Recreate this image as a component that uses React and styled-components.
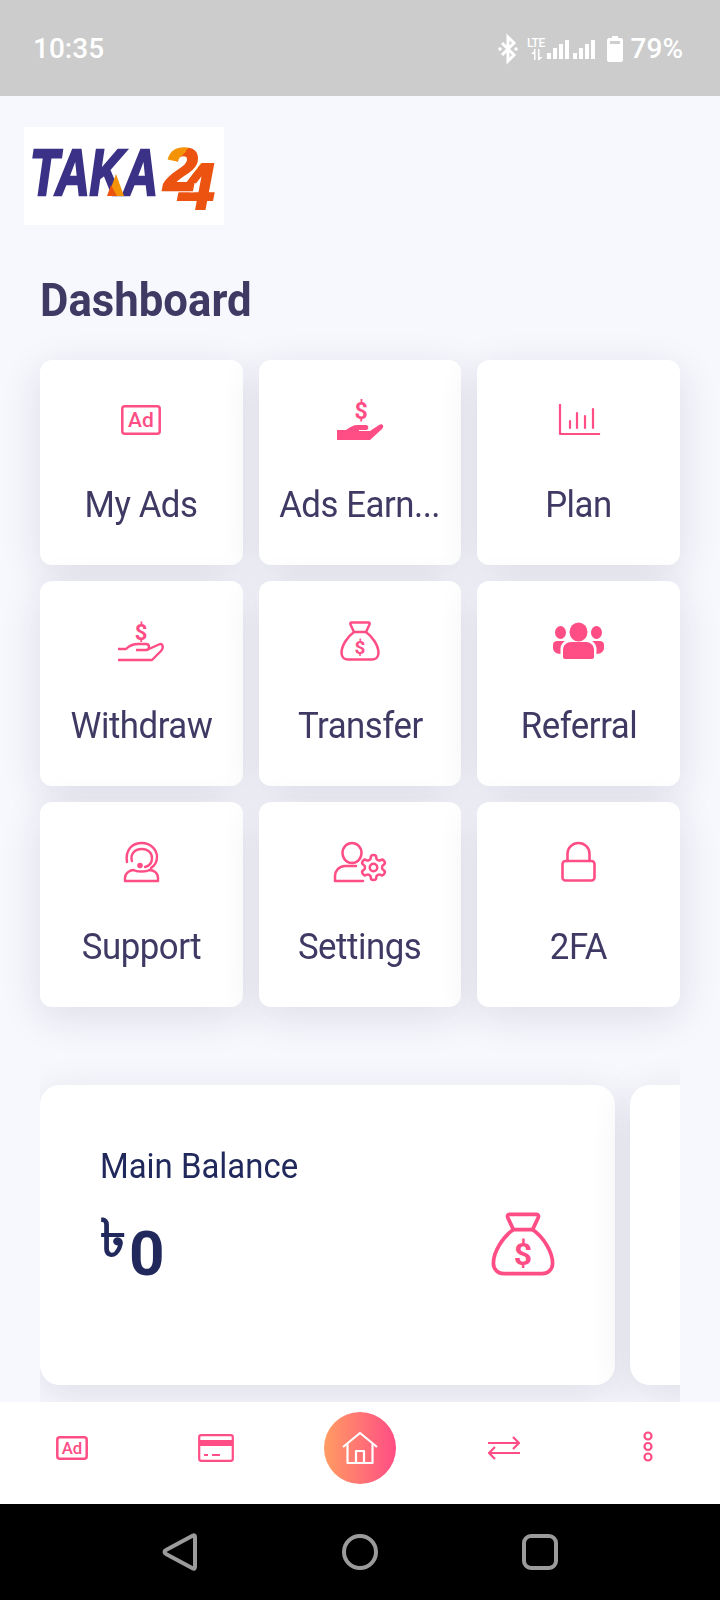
import React from "react"
import styled, { createGlobalStyle } from "styled-components"

const PINK = "#ff4d85"

const GlobalStyle = createGlobalStyle`
  * { box-sizing: border-box; }
  html, body { margin: 0; padding: 0; background: #f7f8fd; }
  body { font-family: Roboto, "Noto Sans", sans-serif; }
  svg { overflow: visible; }
`

const Page = styled.div`
  width: 720px;
  height: 1600px;
  display: flex;
  flex-direction: column;
  overflow: hidden;
  background: #f7f8fd;
`

const StatusBar = styled.div`
  height: 96px;
  flex-shrink: 0;
  background: #cccccc;
  display: flex;
  align-items: center;
  justify-content: space-between;
  padding: 2px 37px 0 33px;
  color: #ffffff;
  font-size: 28px;
  font-weight: 500;
  line-height: 32px;
`

const StatusRight = styled.div`
  display: flex;
  align-items: center;
`

const Percent = styled.span`
  margin-left: 8px;
`

const Content = styled.div`
  flex: 1;
  min-height: 0;
  overflow: hidden;
  padding-top: 31px;
`

const LogoBox = styled.div`
  width: 200px;
  height: 98px;
  margin-left: 24px;
  background: #ffffff;
`

const LogoText = styled.text`
  font-family: "Liberation Sans", sans-serif;
  font-weight: 700;
  font-style: italic;
`

const LogoDigit = styled(LogoText)`
  filter: drop-shadow(1px 1px 0 #ffffff);
`

const Title = styled.h1`
  margin: 50px 0 35px 40px;
  font-size: 47px;
  line-height: 50px;
  font-weight: 700;
  color: #3f3a64;
  transform: scaleX(0.93);
  transform-origin: left center;
`

const MenuGrid = styled.div`
  display: grid;
  grid-template-columns: repeat(3, 1fr);
  gap: 16px;
  padding: 0 40px;
`

const MenuCard = styled.div`
  height: 205px;
  background: #ffffff;
  border-radius: 12px;
  box-shadow: 0 10px 40px rgba(30, 34, 70, 0.12);
  display: flex;
  flex-direction: column;
  align-items: center;
`

const IconSlot = styled.div`
  height: 44px;
  margin-top: 38px;
  display: flex;
  align-items: center;
  justify-content: center;
`

const MenuLabel = styled.div`
  margin-top: 42px;
  font-size: 37px;
  line-height: 42px;
  letter-spacing: -0.5px;
  color: #3f3a64;
  white-space: nowrap;
  transform: scaleX(0.94);
`

const Slider = styled.div`
  margin: 48px 40px 0;
  padding: 30px 0 40px;
  display: flex;
  gap: 15px;
  overflow: hidden;
`

const BalanceCard = styled.div`
  flex: 0 0 575px;
  height: 300px;
  background: #ffffff;
  border-radius: 20px;
  box-shadow: 0 10px 40px rgba(30, 34, 70, 0.12);
  padding: 62px 60px 0 60px;
`

const BalanceTitle = styled.div`
  font-size: 35px;
  line-height: 40px;
  color: #21295c;
  transform: scaleX(0.94);
  transform-origin: left center;
`

const BalanceRow = styled.div`
  margin-top: 25px;
  display: flex;
  align-items: flex-start;
  justify-content: space-between;
`

const Amount = styled.div`
  display: flex;
  align-items: flex-start;
  color: #21295c;
  font-weight: 700;
  font-size: 62px;
  line-height: 65px;
`

const Currency = styled.span`
  font-family: "Noto Sans", "DejaVu Sans", sans-serif;
  font-weight: 700;
  font-size: 52px;
  line-height: 48px;
`

const Zero = styled.span`
  margin-top: 9px;
  margin-left: 3px;
`

const BottomNav = styled.div`
  height: 102px;
  flex-shrink: 0;
  padding-bottom: 10px;
  background: #ffffff;
  display: grid;
  grid-template-columns: repeat(5, 144px);
  align-items: center;
  justify-items: center;
`

const HomeButton = styled.div`
  width: 72px;
  height: 72px;
  border-radius: 50%;
  background: linear-gradient(90deg, #ff9c62, ${PINK});
  display: flex;
  align-items: center;
  justify-content: center;
`

const SystemNav = styled.div`
  height: 96px;
  flex-shrink: 0;
  background: #000000;
  display: flex;
  align-items: center;
  justify-content: center;
`

const SystemKey = styled.div`
  width: 180px;
  display: flex;
  justify-content: center;
`

const Gap = styled.span`
  width: ${(p) => p.$w}px;
`

const Ico = ({ w, h, children, fill = "none", stroke = PINK, sw = 2.5 }) => (
  <svg
    width={w}
    height={h}
    viewBox={`0 0 ${w} ${h}`}
    fill={fill}
    stroke={stroke}
    strokeWidth={sw}
    strokeLinecap="round"
    strokeLinejoin="round"
  >
    {children}
  </svg>
)

const Dollar = ({ x, y, size }) => (
  <text
    x={x}
    y={y}
    fontFamily="Roboto, sans-serif"
    fontWeight="700"
    fontSize={size}
    textAnchor="middle"
    fill={PINK}
    stroke="none"
  >
    $
  </text>
)

const AdIcon = ({ w = 40, h = 30 }) => (
  <Ico w={w} h={h}>
    <rect x="1.3" y="1.3" width={w - 2.6} height={h - 2.6} rx="2.5" />
    <text
      x={w / 2}
      y={h * 0.74}
      fontFamily="Roboto, sans-serif"
      fontWeight="500"
      fontSize={h * 0.7}
      textAnchor="middle"
      fill={PINK}
      stroke="none"
    >
      Ad
    </text>
  </Ico>
)

const SolidHand = () => (
  <Ico w={46} h={40} fill={PINK} sw={0}>
    <Dollar x={24} y={19} size={23} />
    <path d="M0 30h9c4-3 7-5 12-5h8c3 0 3 5 0 5h-7v1h11l9-6c3-2 6 1 3 4L33 40H0z" />
  </Ico>
)

const ChartIcon = () => (
  <Ico w={40} h={30} sw={2.2}>
    <path d="M1 0v29h39" strokeLinecap="square" />
    <path d="M11 16v7M18 8v15M26 11v12M34 4v19" />
  </Ico>
)

const OpenHand = () => (
  <Ico w={46} h={40} sw={2.4}>
    <Dollar x={23} y={19} size={22} />
    <path d="M0 28h8c4-4 8-5 12-5h8c4 0 4 6 0 6h-10" strokeLinecap="butt" />
    <path d="M0 39h34l9-9c3-3 2-7-1-7l-11 5" strokeLinecap="butt" />
  </Ico>
)

const Bag = ({ size = 40, sw = 2.5, dollar = 19 }) => (
  <svg width={size} height={size} viewBox="0 0 40 40" fill="none" stroke={PINK} strokeWidth={sw} strokeLinejoin="round">
    <path d="M11.5 1.5h17c1 0 1.500 1 1 2L26 11H14L10.500 3.500c-.5-1 0-2 1-2z" />
    <path d="M14 11C7 16 1.500 25 1.500 32c0 4 3 6.500 6.500 6.500h24c3.500 0 6.500-2.500 6.500-6.500 0-7-5.500-16-12.500-21" />
    <Dollar x={20} y={33} size={dollar} />
  </svg>
)

const PeopleIcon = () => (
  <Ico w={51} h={36} fill={PINK} sw={0}>
    <ellipse cx="25.500" cy="9" rx="9" ry="9.500" />
    <ellipse cx="7.500" cy="9.500" rx="5.500" ry="6.500" />
    <ellipse cx="43.500" cy="9.500" rx="5.500" ry="6.500" />
    <path d="M10 27c0-5 4-8 8-8h15c4 0 8 3 8 8v7c0 1-1 2-2 2H12c-1 0-2-1-2-2z" />
    <path d="M0 22c0-3 2-4 4-4h8c-3 2-4 4-4.500 7v6C3 31 0 28 0 25zM51 22c0-3-2-4-4-4h-8c3 2 4 4 4.500 7v6c4.500 0 7.500-3 7.500-6z" />
  </Ico>
)

const SupportIcon = () => (
  <Ico w={35} h={40} sw={2.4}>
    <path d="M3 20C1 8 8 1 18 1c9 0 15 7 15 14 0 5-3 9-6 11" />
    <path d="M8 19c-2-6 2-12 10-12 6 0 10 4 10 9s-3 8-7 9" />
    <circle cx="16" cy="23.500" r="2.800" fill={PINK} stroke="none" />
    <path d="M1 39v-3c0-5 5-8 9-8 2 2 13 2 15 0 5 0 9 3 9 8v3z" />
  </Ico>
)

const SettingsIcon = () => (
  <Ico w={51} h={40} sw={2.5}>
    <ellipse cx="18" cy="11" rx="9.500" ry="10" />
    <path d="M22 24H11C5 24 1 29 1 34v5h28" />
    <g transform="translate(24.500 10.500) scale(1.25)" strokeWidth="2">
      <path d="M12.220 2h-.44a2 2 0 0 0-2 2v.18a2 2 0 0 1-1 1.730l-.43.25a2 2 0 0 1-2 0l-.15-.08a2 2 0 0 0-2.730.73l-.22.38a2 2 0 0 0 .73 2.730l.15.1a2 2 0 0 1 1 1.720v.51a2 2 0 0 1-1 1.740l-.15.09a2 2 0 0 0-.73 2.730l.22.38a2 2 0 0 0 2.730.73l.15-.08a2 2 0 0 1 2 0l.43.25a2 2 0 0 1 1 1.730V20a2 2 0 0 0 2 2h.44a2 2 0 0 0 2-2v-.18a2 2 0 0 1 1-1.730l.43-.25a2 2 0 0 1 2 0l.15.08a2 2 0 0 0 2.730-.73l.22-.39a2 2 0 0 0-.73-2.730l-.15-.08a2 2 0 0 1-1-1.740v-.5a2 2 0 0 1 1-1.740l.15-.09a2 2 0 0 0 .73-2.730l-.22-.38a2 2 0 0 0-2.730-.73l-.15.08a2 2 0 0 1-2 0l-.43-.25a2 2 0 0 1-1-1.730V4a2 2 0 0 0-2-2z" fill="#fff" />
      <circle cx="12" cy="12" r="3" />
    </g>
  </Ico>
)

const LockIcon = () => (
  <Ico w={35} h={40} sw={2.6}>
    <path d="M6.500 19v-7.500a11 10.500 0 0 1 22 0V19" />
    <rect x="1.500" y="19" width="32" height="19.500" rx="3" />
  </Ico>
)

const CardIcon = () => (
  <Ico w={36} h={28} sw={2.2}>
    <rect x="1.200" y="1.200" width="33.600" height="25.600" rx="2" />
    <rect x="1" y="6" width="34" height="6" fill={PINK} stroke="none" />
    <path d="M6 21h4M14 21h8" strokeLinecap="butt" />
  </Ico>
)

const HomeIcon = () => (
  <Ico w={36} h={32} stroke="#ffffff" sw={2.2}>
    <path d="M1 15L18 1l17 14" strokeLinecap="butt" />
    <path d="M5.500 12v19h25V12" strokeLinecap="butt" />
    <path d="M14 31V19h8v12" strokeLinecap="butt" />
  </Ico>
)

const ArrowsIcon = () => (
  <Ico w={32} h={22} sw={2.2}>
    <path d="M0 6h31M25 0l6 6-6 6" strokeLinecap="butt" />
    <path d="M32 16H1M7 10l-6 6 6 6" strokeLinecap="butt" />
  </Ico>
)

const DotsIcon = () => (
  <Ico w={10} h={31} sw={2.2}>
    <circle cx="5" cy="3" r="3.500" />
    <circle cx="5" cy="13.500" r="3.500" />
    <circle cx="5" cy="24" r="3.500" />
  </Ico>
)

const BluetoothIcon = () => (
  <Ico w={20} h={26} stroke="#ffffff" sw={3}>
    <path d="M4 7l12 12-6 6V1l6 6L4 19" strokeLinecap="butt" strokeLinejoin="miter" />
    <circle cx="2" cy="13" r="1.800" fill="#fff" stroke="none" />
    <circle cx="18" cy="13" r="1.800" fill="#fff" stroke="none" />
  </Ico>
)

const SignalIcon = () => (
  <svg width="69" height="24" viewBox="0 0 69 24" fill="#ffffff">
    <text x="0" y="10" fontFamily="Roboto, sans-serif" fontSize="12" letterSpacing="-0.4">LTE</text>
    <path d="M7 12h1.500v11H7zM4 17l3-3v3zM11 12h1.500v11H11zM12.500 20l3 0-3 3z" />
    <rect x="20" y="16" width="4" height="6" />
    <rect x="26" y="11" width="4" height="11" />
    <rect x="32" y="7" width="4" height="15" />
    <rect x="38" y="3" width="4" height="19" />
    <rect x="46" y="16" width="4" height="6" />
    <rect x="52" y="11" width="4" height="11" />
    <rect x="58" y="7" width="4" height="15" />
    <rect x="64" y="3" width="4" height="19" />
  </svg>
)

const BatteryIcon = () => (
  <svg width="16" height="26" viewBox="0 0 16 26" fill="#ffffff" style={{ marginLeft: 11 }}>
    <path d="M5 0h6v2h3c1 0 2 1 2 2v20c0 1-1 2-2 2H2c-1 0-2-1-2-2V4c0-1 1-2 2-2h3z" />
    <rect x="3" y="5" width="10" height="3" fill="#cfcfcf" />
  </svg>
)

const LogoMark = () => (
  <svg width="200" height="98" viewBox="0 0 200 98">
    <defs>
      <linearGradient id="two" x1="0" y1="0" x2="0.6" y2="1">
        <stop offset="0.46" stopColor="#f49308" />
        <stop offset="0.46" stopColor="#ec5310" />
      </linearGradient>
      <linearGradient id="four" x1="0" y1="0" x2="0.6" y2="1">
        <stop offset="0.42" stopColor="#f49308" />
        <stop offset="0.42" stopColor="#ec5310" />
      </linearGradient>
    </defs>
    <LogoText
      x="6"
      y="68"
      fontSize="65"
      textLength="128"
      lengthAdjust="spacingAndGlyphs"
      fill="#3b3186"
      stroke="#3b3186"
      strokeWidth="2.500"
    >
      TAKA
    </LogoText>
    <path d="M84 69l8-22 8 22z" fill="#f49308" />
    <path d="M83 69l4-11 6 11z" fill="#ec5310" />
    <LogoDigit x="155" y="82" fontSize="64" fill="url(#four)" stroke="url(#four)" strokeWidth="2">
      4
    </LogoDigit>
    <LogoDigit x="140" y="63" fontSize="60" fill="url(#two)" stroke="url(#two)" strokeWidth="2.500">
      2
    </LogoDigit>
  </svg>
)

const menu = [
  { label: "My Ads", icon: <AdIcon /> },
  { label: "Ads Earn...", icon: <SolidHand /> },
  { label: "Plan", icon: <ChartIcon /> },
  { label: "Withdraw", icon: <OpenHand /> },
  { label: "Transfer", icon: <Bag /> },
  { label: "Referral", icon: <PeopleIcon /> },
  { label: "Support", icon: <SupportIcon /> },
  { label: "Settings", icon: <SettingsIcon /> },
  { label: "2FA", icon: <LockIcon /> },
]

export default function App() {
  return (
    <Page>
      <GlobalStyle />
      <StatusBar>
        <span>10:35</span>
        <StatusRight>
          <BluetoothIcon />
          <Gap $w={9} />
          <SignalIcon />
          <BatteryIcon />
          <Percent>79%</Percent>
        </StatusRight>
      </StatusBar>

      <Content>
        <LogoBox>
          <LogoMark />
        </LogoBox>
        <Title>Dashboard</Title>
        <MenuGrid>
          {menu.map((item) => (
            <MenuCard key={item.label}>
              <IconSlot>{item.icon}</IconSlot>
              <MenuLabel>{item.label}</MenuLabel>
            </MenuCard>
          ))}
        </MenuGrid>
        <Slider>
          <BalanceCard>
            <BalanceTitle>Main Balance</BalanceTitle>
            <BalanceRow>
              <Amount>
                <Currency>৳</Currency>
                <Zero>0</Zero>
              </Amount>
              <Bag size={64} sw={2.3} dollar={20} />
            </BalanceRow>
          </BalanceCard>
          <BalanceCard />
        </Slider>
      </Content>

      <BottomNav>
        <AdIcon w={32} h={24} />
        <CardIcon />
        <HomeButton>
          <HomeIcon />
        </HomeButton>
        <ArrowsIcon />
        <DotsIcon />
      </BottomNav>

      <SystemNav>
        <SystemKey>
          <Ico w={36} h={40} stroke="#9b9b9b" sw={4}>
            <path d="M31 3.500c1-.5 2 0 2 1.500v30c0 1.500-1 2-2 1.500L4 22c-2-1-2-3 0-4z" />
          </Ico>
        </SystemKey>
        <SystemKey>
          <Ico w={36} h={36} stroke="#9b9b9b" sw={4}>
            <circle cx="18" cy="18" r="16" />
          </Ico>
        </SystemKey>
        <SystemKey>
          <Ico w={36} h={36} stroke="#9b9b9b" sw={4}>
            <rect x="2" y="2" width="32" height="32" rx="7" />
          </Ico>
        </SystemKey>
      </SystemNav>
    </Page>
  )
}
